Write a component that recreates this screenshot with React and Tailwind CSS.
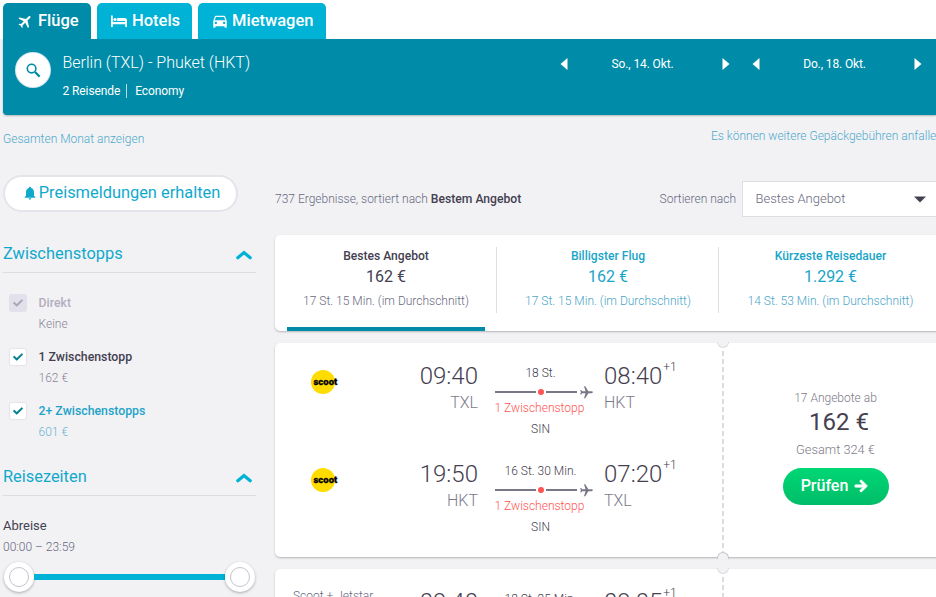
import { FaCheck, FaArrowRight } from 'react-icons/fa'
import { MdDirectionsCar, MdFlight, MdNotifications } from 'react-icons/md'

const sortOptions = [
  { label: 'Bestes Angebot',     price: '162 €',   duration: '17 St. 15 Min. (im Durchschnitt)', active: true },
  { label: 'Billigster Flug',    price: '162 €',   duration: '17 St. 15 Min. (im Durchschnitt)' },
  { label: 'Kürzeste Reisedauer', price: '1.292 €', duration: '14 St. 53 Min. (im Durchschnitt)' },
]

const stops = [
  { label: 'Direkt',           price: 'Keine', state: 'disabled' },
  { label: '1 Zwischenstopp',  price: '162 €', state: 'active' },
  { label: '2+ Zwischenstopps', price: '601 €', state: 'link' },
]

const stopStyles = {
  disabled: { label: 'text-[#b2aebd]', price: 'text-[#8b8794]', box: 'bg-[#e2e0ea] text-[#aaa6b8] shadow-[0_0_0_1px_#e2e0ea]' },
  active:   { label: 'text-[#444050]', price: 'text-[#8b8794]', box: 'bg-white text-[#008090] shadow-[0_0_1px_1px_#e4e4ea]' },
  link:     { label: 'text-[#1ea3c8]', price: 'text-[#68b3d2]', box: 'bg-white text-[#008090] shadow-[0_0_1px_1px_#e4e4ea]' },
}

const flights = [
  [
    { depart: '09:40', from: 'TXL', arrive: '08:40', to: 'HKT', duration: '18 St.' },
    { depart: '19:50', from: 'HKT', arrive: '07:20', to: 'TXL', duration: '16 St. 30 Min.' },
  ],
  [
    { depart: '09:40', from: 'TXL', arrive: '09:05', to: 'HKT', duration: '18 St. 25 Min.', airline: 'Scoot + Jetstar' },
  ],
]

function BedIcon() {
  return (
    <svg width="16" height="12" viewBox="0 0 16 12" fill="currentColor">
      <path d="M0 0.500h1.800V7H14V5.500h2V12h-1.800V9.200H1.800V12H0z" />
      <circle cx="4" cy="4.500" r="1.600" />
      <path d="M6.200 3h7.300q2.500 0 2.500 2.500V6H6.200z" />
    </svg>
  )
}

function Tab({ icon, label, className }) {
  return (
    <a className={`flex h-9 items-center text-[16.500px] font-medium leading-none text-white rounded-t-[5px] ${className}`}>
      {icon}
      <span className="whitespace-nowrap">{label}</span>
    </a>
  )
}

function DatePicker({ date }) {
  return (
    <div className="flex w-[170px] items-center justify-between text-white">
      <svg width="8" height="12" viewBox="0 0 8 12" fill="currentColor"><path d="M7.500 0v12L0.500 6z" /></svg>
      <span className="mr-[5px] text-[12px] tracking-[-0.120px]">{date}</span>
      <svg width="8" height="12" viewBox="0 0 8 12" fill="currentColor"><path d="M0.500 0v12L7.500 6z" /></svg>
    </div>
  )
}

function Header() {
  return (
    <header>
      <nav className="flex gap-[6px] bg-white pl-[3px] pt-[3px]">
        <Tab className="w-[88px] gap-1 bg-[#008ca8] pl-[14px]" icon={<MdFlight className="rotate-45 text-[17px]" />} label="Flüge" />
        <Tab className="w-[95px] gap-[5px] bg-[#00b2d6] pl-[14px]" icon={<BedIcon />} label="Hotels" />
        <Tab className="w-[128px] gap-[3px] bg-[#00b2d6] pl-[13px]" icon={<MdDirectionsCar className="text-[18px]" />} label="Mietwagen" />
      </nav>
      <div className="ml-[3px] flex h-[76px] items-start rounded-bl-[4px] bg-[#008ca8] pl-[13px] pr-[14px] shadow-[0_1px_2px_rgba(0,0,0,0.25)]">
        <button className="mt-[14px] flex size-[34px] items-center justify-center rounded-full bg-white text-[#008ca8] shadow-[0_0_0_1px_#d5e6f2]">
          <svg width="15" height="15" viewBox="0 0 15 15" fill="none" stroke="currentColor">
            <circle cx="5.600" cy="5.600" r="4.300" strokeWidth="1.600" />
            <path d="M9 9l4.600 4.600" strokeWidth="2.200" />
          </svg>
        </button>
        <div className="ml-[12.500px] mt-[13px] text-white">
          <h1 className="text-[16px] font-light leading-[22px]">Berlin (TXL) - Phuket (HKT)</h1>
          <p className="mt-[7px] flex text-[12px] leading-5 tracking-[-0.100px]">
            <span className="mr-[6px]">2 Reisende</span>
            <span className="my-[3px] border-l border-white/70 pl-2 leading-[14px]">Economy</span>
          </p>
        </div>
        <div className="ml-auto mt-4 flex gap-[22px]">
          <DatePicker date="So., 14. Okt." />
          <DatePicker date="Do., 18. Okt." />
        </div>
      </div>
    </header>
  )
}

function SectionTitle({ children }) {
  return (
    <div className="flex h-9 items-start justify-between border-b border-[#dcdce2] pr-1">
      <h2 className="text-[16.400px] leading-[34px] text-[#10a9cc]">{children}</h2>
      <svg className="mt-[13px]" width="16" height="10" viewBox="0 0 16 10" fill="none" stroke="#00b2d6" strokeWidth="3.200">
        <path d="M1.800 7.800L8 2.500l6.200 5.300" strokeLinecap="round" />
      </svg>
    </div>
  )
}

function Sidebar() {
  return (
    <aside className="w-[253px] shrink-0">
      <button className="ml-[2px] mt-[1px] flex h-[33px] w-[231px] items-center justify-center gap-[1px] rounded-full bg-white pb-[1px] pl-[1px] text-[#10a9cc] shadow-[0_0_0_2px_#e4e4ea]">
        <MdNotifications className="text-[16px]" />
        <span className="text-[16.400px]">Preismeldungen erhalten</span>
      </button>

      <div className="mt-[27px]">
        <SectionTitle>Zwischenstopps</SectionTitle>
        <ul className="pt-5">
          {stops.map(({ label, price, state }) => (
            <li key={label} className="flex h-[54px] pl-[7px]">
              <span className={`mt-[2px] flex size-4 items-center justify-center rounded-[2px] ${stopStyles[state].box}`}>
                <FaCheck className="text-[10px]" />
              </span>
              <span className="ml-[12.500px]">
                <span className={`block text-[12.300px] font-medium leading-5 ${stopStyles[state].label}`}>{label}</span>
                <span className={`block text-[12px] font-light leading-[22px] ${stopStyles[state].price}`}>{price}</span>
              </span>
            </li>
          ))}
        </ul>
      </div>

      <div className="mt-[5px]">
        <SectionTitle>Reisezeiten</SectionTitle>
        <p className="mt-5 text-[13px] leading-5 text-[#444050]">Abreise</p>
        <p className="text-[12px] font-light leading-[22px] text-[#68697f]">00:00 – 23:59</p>
        <div className="mt-1 flex items-center pl-[1px] pr-[1px]">
          <Thumb />
          <div className="h-[6px] flex-1 bg-[#00b2d6]" />
          <Thumb />
        </div>
      </div>
    </aside>
  )
}

function Thumb() {
  return (
    <span className="flex size-[30px] items-center justify-center rounded-full bg-white shadow-[0_1px_3px_rgba(0,0,0,0.3)]">
      <span className="size-5 rounded-full border border-[#c5c2cf]" />
    </span>
  )
}

function SortCard() {
  return (
    <div className="flex h-24 w-[666px] rounded-[5px] bg-white shadow-[0_1px_2px_rgba(0,0,0,0.25)]">
      {sortOptions.map(({ label, price, duration, active }) => (
        <div key={label} className={`flex w-[222px] flex-col pt-3 text-center ${active ? 'text-[#444050]' : 'text-[#18a5c9]'}`}>
          <div className={`h-[66px] pl-[1px] ${label === 'Kürzeste Reisedauer' ? '' : 'border-r border-[#dddde3]'}`}>
            <p className="text-[12.100px] font-medium leading-[18px]">{label}</p>
            <p className="text-[16px] leading-6">{price}</p>
            <p className={`text-[12px] font-light leading-6 ${active ? 'text-[#68697f]' : 'text-[#4aa5c8]'}`}>{duration}</p>
          </div>
          {active && <div className="mx-3 mt-[14px] h-1 bg-[#008ca8]" />}
        </div>
      ))}
    </div>
  )
}

function ScootLogo() {
  return (
    <div className="ml-[35.500px] mt-[27px] flex size-6 items-center rounded-full bg-[#ffdc00] pl-[3px]">
      <span className="text-[9.500px] font-black leading-none text-black [-webkit-text-stroke:0.3px_black]">scoot</span>
    </div>
  )
}

function Leg({ depart, from, arrive, to, duration, airline }) {
  return (
    <div className="flex h-[98px] text-[#444050]">
      <div className="w-[120px]">
        {airline
          ? <p className="ml-[18px] mt-[17px] text-[12px] font-light leading-5 text-[#68697f]">{airline}</p>
          : <ScootLogo />}
      </div>
      <div className="w-[83px] pt-[21px] text-right font-light">
        <p className="text-[24px] leading-6">{depart}</p>
        <p className="mt-[5px] text-[16px] leading-5 text-[#7d7a88]">{from}</p>
      </div>
      <div className="ml-[17px] w-[98px] pt-[22px] text-[12px] font-light leading-4">
        <p className="w-[91px] text-center">{duration}</p>
        <div className="mt-[5px] flex h-3 items-center *:shrink-0">
          <span className="h-[2px] w-[41px] bg-[#7b7687]" />
          <span className="mx-[2px] size-[6px] rounded-full bg-[#ff5452]" />
          <span className="h-[2px] w-[31px] bg-[#7b7687]" />
          <MdFlight className="ml-[2px] rotate-90 text-[15px] text-[#7b7687]" />
        </div>
        <p className="mt-[2px] w-[91px] -ml-[0.500px] whitespace-nowrap text-[#ff5452]">1 Zwischenstopp</p>
        <p className="mt-[5px] w-[91px] text-center">SIN</p>
      </div>
      <div className="ml-[11px] pt-[21px] font-light">
        <p className="flex text-[24px] leading-6">
          {arrive}
          <sup className="ml-[1px] -mt-[3px] top-0 text-[12px] leading-none">+1</sup>
        </p>
        <p className="mt-[5px] text-[16px] leading-5 text-[#7d7a88]">{to}</p>
      </div>
    </div>
  )
}

function FlightCard({ legs }) {
  return (
    <div className="mt-3 flex h-[214px] w-[672px] rounded-[5px] bg-white shadow-[0_1px_2px_rgba(0,0,0,0.25)]">
      <div className="w-[448px]">
        {legs.map((leg) => <Leg key={leg.from} {...leg} />)}
      </div>

      {/* Ticket perforation */}
      <div className="relative -ml-[1px] w-[2px] bg-[repeating-linear-gradient(to_bottom,#dcdce1_0_5px,transparent_5px_8px)]">
        <span className="absolute -left-[5px] -top-[1px] h-[6px] w-3 rounded-b-full border border-t-0 border-[#dcdce1] bg-[#f2f2f5]" />
        <span className="absolute -bottom-[2px] -left-[5px] h-[7px] w-3 rounded-t-full border border-b-0 border-[#c4c4ca] bg-[#f2f2f5]" />
      </div>

      <div className="flex flex-1 flex-col items-center pt-[45px] font-light text-[#7d7a88]">
        <p className="text-[12px] leading-5">17 Angebote ab</p>
        <p className="pl-[7px] text-[24px] font-normal leading-7 text-[#444050]">162 €</p>
        <p className="mt-1 text-[12.800px] leading-5">Gesamt 324 €</p>
        <button className="mt-2 flex h-[37px] w-[106px] items-center justify-center gap-[6px] rounded-full bg-linear-to-b from-[#00d775] to-[#00bd68] pb-[1px] pr-[2px] text-[16px] font-medium text-white">
          Prüfen
          <FaArrowRight className="text-[14px]" stroke="currentColor" strokeWidth="36" />
        </button>
      </div>
    </div>
  )
}

export default function App() {
  return (
    <div className="h-[597px] w-[936px] overflow-hidden bg-[#f2f2f5] font-[Roboto,sans-serif]">
      <Header />
      <div className="flex h-[61px] justify-between pl-[3px] text-[12px] font-light leading-5 text-[#4fa9cb]">
        <a className="mt-[14px]">Gesamten Monat anzeigen</a>
        <a className="mt-[11px] w-[225px] overflow-hidden whitespace-nowrap">Es können weitere Gepäckgebühren anfallen</a>
      </div>
      <div className="flex pl-[3px]">
        <Sidebar />
        <main className="ml-[19px]">
          <div className="mt-[5px] flex h-[36px] w-[661px] items-center text-[12px] font-light text-[#68697f]">
            <p>737 Ergebnisse, sortiert nach <b className="text-[12.150px] font-medium text-[#444050]">Bestem Angebot</b></p>
            <span className="ml-auto mr-[6px]">Sortieren nach</span>
            <div className="flex h-9 w-[194px] items-center justify-between border border-r-0 border-[#dddde3] bg-white pl-[12.500px] pr-[10px] text-[13px]">
              Bestes Angebot
              <svg width="12" height="7" viewBox="0 0 12 7" fill="#444050"><path d="M0 0.500h12L6 6.500z" /></svg>
            </div>
          </div>
          <div className="mt-[18px]">
            <SortCard />
            {flights.map((legs, i) => <FlightCard key={i} legs={legs} />)}
          </div>
        </main>
      </div>
    </div>
  )
}
